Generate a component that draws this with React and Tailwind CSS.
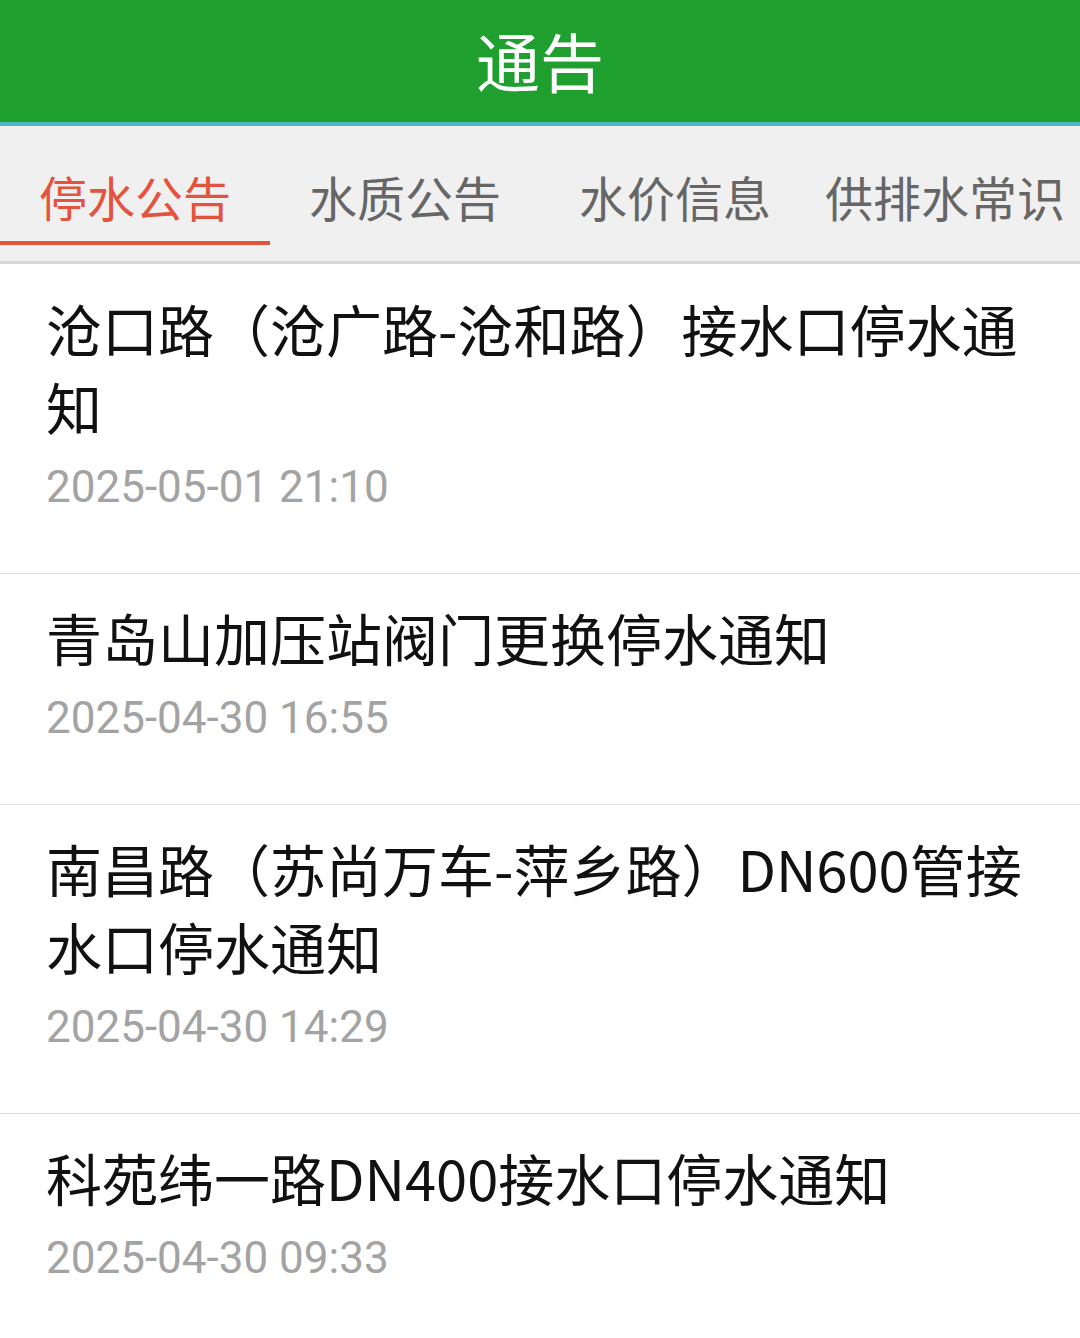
import { useState } from "react"

const tabs = ["停水公告", "水质公告", "水价信息", "供排水常识"]

const notices = [
  { title: "沧口路（沧广路-沧和路）接水口停水通知", time: "2025-05-01 21:10" },
  { title: "青岛山加压站阀门更换停水通知", time: "2025-04-30 16:55" },
  { title: "南昌路（苏尚万车-萍乡路）DN600管接水口停水通知", time: "2025-04-30 14:29" },
  { title: "科苑纬一路DN400接水口停水通知", time: "2025-04-30 09:33" },
]

const cjk = "font-['Noto_Sans_CJK_SC','Noto_Sans',sans-serif]"

export default function App() {
  const [active, setActive] = useState(0)

  return (
    <div className={`w-[1080px] min-h-[1338px] bg-white ${cjk}`}>
      <div className="h-[126px] bg-[#1e9f2e] border-b-[4px] border-[#4fb8c4] flex items-center justify-center pb-[4px]">
        <h1 className="text-[64px] leading-none text-white">通告</h1>
      </div>

      <div className="h-[138px] bg-[#f0f0f0] border-b-[3px] border-[#d8d8d8] flex">
        {tabs.map((t, i) => (
          <div
            key={t}
            className="relative flex-1 flex items-center justify-center pt-[4px] cursor-pointer"
            onClick={() => setActive(i)}
          >
            <span className={`text-[48px] leading-none whitespace-nowrap ${i === active ? "text-[#e4533d]" : "text-[#666666]"}`}>{t}</span>
            {i === active && <div className="absolute left-0 right-0 bottom-[16px] h-[4px] bg-[#e4533d]" />}
          </div>
        ))}
      </div>

      <div className="pt-[1px]">
        {notices.map((n, i) => (
          <div key={n.time} className={`pl-[46px] pr-[40px] pt-[24px] pb-[56px] ${i < notices.length - 1 ? "border-b border-[#e2e2e2]" : ""}`}>
            <p className="text-[56px] leading-[78px] text-[#111111]">{n.title}</p>
            <p className="mt-[12px] text-[44px] leading-[60px] text-[#a3a3a3] font-['Roboto',sans-serif]">{n.time}</p>
          </div>
        ))}
      </div>
    </div>
  )
}
